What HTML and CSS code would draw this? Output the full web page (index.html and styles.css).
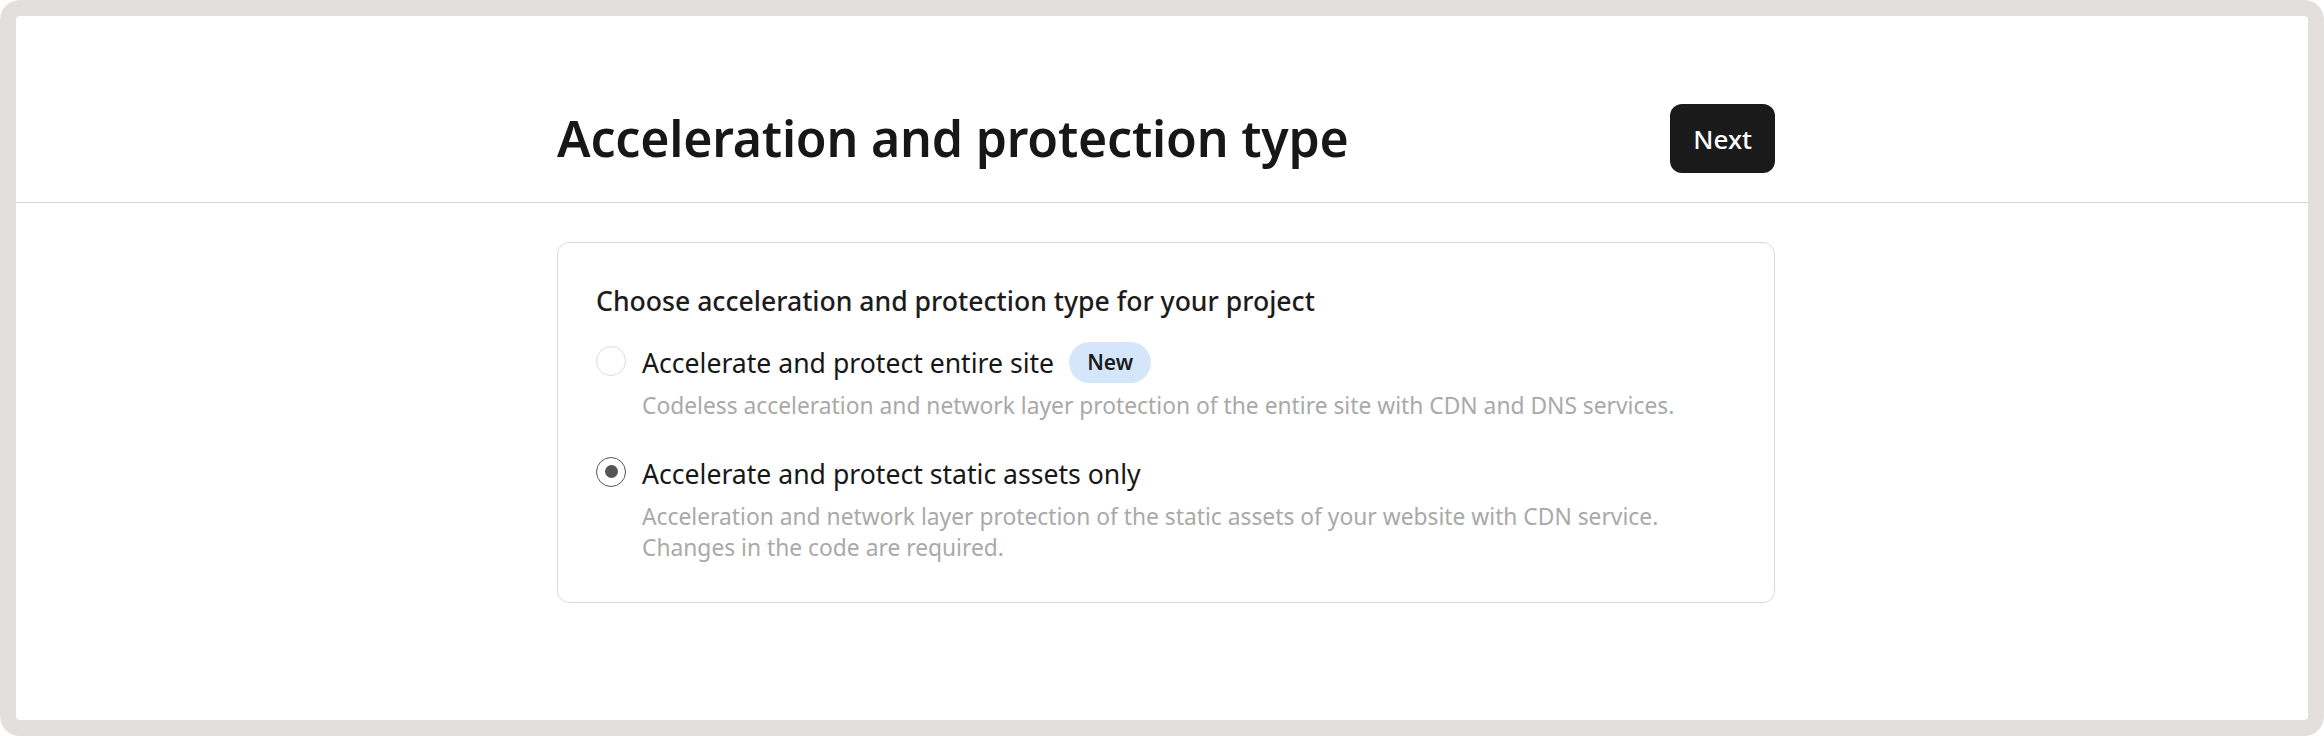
FILE: index.html
```html
<!DOCTYPE html>
<html lang="en">
<head>
<meta charset="utf-8">
<title>Acceleration and protection type</title>
<link rel="stylesheet" href="styles.css">
</head>
<body>
<div class="frame">
  <div class="sheet">
    <header class="header">
      <div class="column header-row">
        <h1 class="title">Acceleration and protection type</h1>
        <button class="btn-next" type="button">Next</button>
      </div>
    </header>
    <main class="column">
      <section class="card">
        <h2 class="card-title">Choose acceleration and protection type for your project</h2>
        <div class="option">
          <div class="option-row">
            <span class="radio"></span>
            <span class="option-label">Accelerate and protect entire site</span>
            <span class="badge">New</span>
          </div>
          <p class="option-desc">Codeless acceleration and network layer protection of the entire site with CDN and DNS services.</p>
        </div>
        <div class="option option-second">
          <div class="option-row">
            <span class="radio radio-checked"></span>
            <span class="option-label">Accelerate and protect static assets only</span>
          </div>
          <p class="option-desc">Acceleration and network layer protection of the static assets of your website with CDN service.<br>Changes in the code are required.</p>
        </div>
      </section>
    </main>
  </div>
</div>
</body>
</html>
```

FILE: styles.css
```css
* { box-sizing: border-box; }

html, body {
  margin: 0;
  padding: 0;
  height: 100%;
}

body {
  font-family: "Noto Sans", "Open Sans", sans-serif;
  color: #1c1c1c;
  background: #ffffff;
}

.frame {
  height: 736px;
  padding: 16px;
  background: #e2dfde;
  border-radius: 20px;
}

.sheet {
  height: 100%;
  background: #ffffff;
  border-radius: 4px;
  overflow: hidden;
}

.column {
  width: 1218px;
  margin-left: 541px;
}

.header {
  border-bottom: 1px solid #d6d6d6;
  padding-top: 88px;
  padding-bottom: 29px;
}

.header-row {
  display: flex;
  align-items: center;
  justify-content: space-between;
  height: 69px;
}

.title {
  margin: 0;
  font-size: 50px;
  font-weight: 600;
  line-height: 69px;
  color: #171717;
  letter-spacing: -0.2px;
}

.btn-next {
  height: 69px;
  padding: 0 23px;
  border: none;
  border-radius: 12px;
  background: #1a1a1a;
  color: #ffffff;
  font-family: inherit;
  font-size: 26px;
  font-weight: 500;
}

.card {
  margin-top: 39px;
  border: 1px solid #dadada;
  border-radius: 12px;
  padding: 40px 38px 39px;
}

.card-title {
  margin: 0;
  font-size: 26.6px;
  font-weight: 500;
  line-height: 36px;
  color: #1c1c1c;
}

.option {
  margin-top: 23px;
}

.option-second {
  margin-top: 32px;
}

.option-row {
  display: flex;
  align-items: center;
  min-height: 41px;
}

.radio {
  flex: none;
  width: 30px;
  height: 30px;
  border-radius: 50%;
  border: 1px solid #dcdcdc;
  margin-top: -4px;
  margin-right: 16px;
  display: flex;
  align-items: center;
  justify-content: center;
}

.radio-checked {
  border: 1.5px solid #555555;
}

.radio-checked::after {
  content: "";
  width: 13px;
  height: 13px;
  border-radius: 50%;
  background: #555555;
}

.option-label {
  font-size: 26.6px;
  line-height: 36px;
  color: #171717;
}

.badge {
  margin-left: 15px;
  height: 41px;
  padding: 0 18px;
  border-radius: 21px;
  background: #d5e6fb;
  color: #1c1c1c;
  font-size: 21px;
  font-weight: 600;
  line-height: 41px;
}

.option-desc {
  margin: 7px 0 0 46px;
  font-size: 22.8px;
  line-height: 31px;
  color: #a9a9a9;
}
```
